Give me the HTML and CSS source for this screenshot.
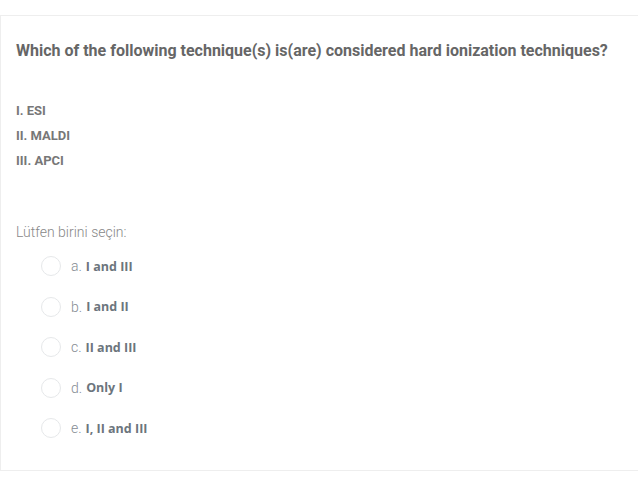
FILE: index.html
```html
<!DOCTYPE html>
<html>
<head>
<meta charset="utf-8">
<link rel="stylesheet" href="styles.css">
</head>
<body>
<div class="card">
  <div class="question">Which of the following technique(s) is(are) considered hard ionization techniques?</div>
  <div class="items">
    <div class="item">I. ESI</div>
    <div class="item">II. MALDI</div>
    <div class="item">III. APCI</div>
  </div>
  <div class="prompt">Lütfen birini seçin:</div>
  <div class="options">
    <label class="option"><span class="radio"></span><span class="letter">a.</span><b>I and III</b></label>
    <label class="option"><span class="radio"></span><span class="letter">b.</span><b>I and II</b></label>
    <label class="option"><span class="radio"></span><span class="letter">c.</span><b>II and III</b></label>
    <label class="option"><span class="radio"></span><span class="letter">d.</span><b>Only I</b></label>
    <label class="option"><span class="radio"></span><span class="letter">e.</span><b>I, II and III</b></label>
  </div>
</div>
</body>
</html>
```
FILE: styles.css
```css
html, body { margin: 0; padding: 0; background: #fff; }
body { font-family: Roboto, "Liberation Sans", sans-serif; }
.card {
  margin-top: 15px;
  border: 1px solid #eeeeee;
  border-right: none;
  height: 454px;
  box-sizing: content-box;
  padding: 0 0 0 15px;
}
.question {
  margin-top: 25px;
  font-size: 16px;
  font-weight: 700;
  color: #666;
  line-height: 20px;
}
.items { margin-top: 37px; }
.item {
  font-size: 13px;
  font-weight: 700;
  color: #777;
  line-height: 25px;
  height: 25px;
}
.prompt {
  margin-top: 51px;
  font-size: 14px;
  font-weight: 300;
  color: #888;
  line-height: 16px;
}
.options { margin-top: 6px; padding-left: 25px; }
.option {
  display: flex;
  align-items: center;
  height: 40.5px;
  font-size: 14px;
  color: #6c757d;
}
.radio {
  width: 20px;
  height: 20px;
  border: 1px solid #e6e8ea;
  border-radius: 50%;
  box-sizing: border-box;
  margin-right: 10px;
  background: #fff;
}
.letter { font-weight: 300; color: #858c93; margin-right: 4px; }
.option b { font-family: "Open Sans", sans-serif; font-weight: 700; font-size: 12.5px; color: #6c757d; }
```
